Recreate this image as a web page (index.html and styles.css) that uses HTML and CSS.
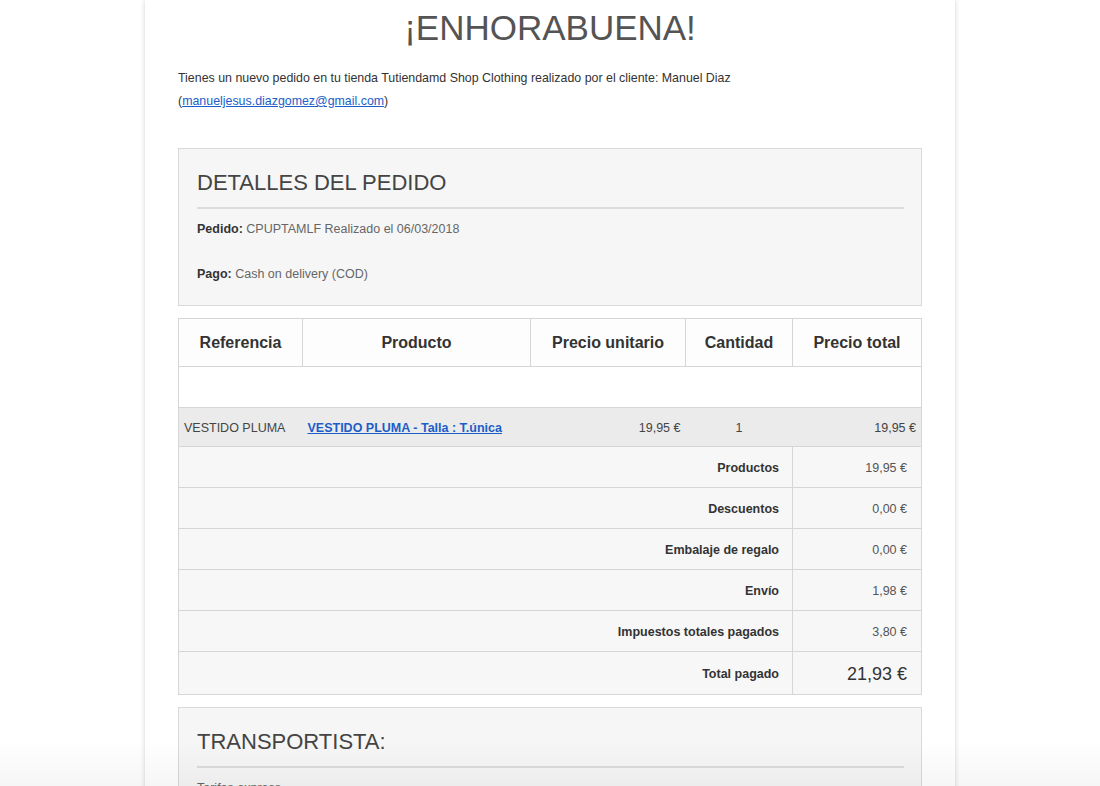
FILE: index.html
```html
<!DOCTYPE html>
<html lang="es">
<head>
    <meta charset="UTF-8">
    <title>Nuevo pedido</title>
    <link rel="stylesheet" href="styles.css">
</head>
<body>
    <div class="mail">
        <h1>¡ENHORABUENA!</h1>
        <p class="intro">
            Tienes un nuevo pedido en tu tienda Tutiendamd Shop Clothing realizado por el cliente: Manuel Diaz<br>
            (<a href="#">manueljesus.diazgomez@gmail.com</a>)
        </p>

        <div class="box">
            <h2>DETALLES DEL PEDIDO</h2>
            <p><strong>Pedido:</strong> CPUPTAMLF Realizado el 06/03/2018</p>
            <p><strong>Pago:</strong> Cash on delivery (COD)</p>
        </div>

        <table class="order">
            <colgroup>
                <col class="c-ref">
                <col class="c-prod">
                <col class="c-unit">
                <col class="c-qty">
                <col class="c-total">
            </colgroup>
            <thead>
                <tr>
                    <th>Referencia</th>
                    <th>Producto</th>
                    <th>Precio unitario</th>
                    <th>Cantidad</th>
                    <th>Precio total</th>
                </tr>
            </thead>
            <tbody>
                <tr class="empty"><td colspan="5"></td></tr>
                <tr class="item">
                    <td>VESTIDO PLUMA</td>
                    <td><a href="#">VESTIDO PLUMA - Talla : T.única</a></td>
                    <td class="right">19,95 €</td>
                    <td class="center">1</td>
                    <td class="right">19,95 €</td>
                </tr>
                <tr class="sum">
                    <td colspan="4" class="label">Productos</td>
                    <td class="value">19,95 €</td>
                </tr>
                <tr class="sum">
                    <td colspan="4" class="label">Descuentos</td>
                    <td class="value">0,00 €</td>
                </tr>
                <tr class="sum">
                    <td colspan="4" class="label">Embalaje de regalo</td>
                    <td class="value">0,00 €</td>
                </tr>
                <tr class="sum">
                    <td colspan="4" class="label">Envío</td>
                    <td class="value">1,98 €</td>
                </tr>
                <tr class="sum">
                    <td colspan="4" class="label">Impuestos totales pagados</td>
                    <td class="value">3,80 €</td>
                </tr>
                <tr class="sum grand">
                    <td colspan="4" class="label">Total pagado</td>
                    <td class="value">21,93 €</td>
                </tr>
            </tbody>
        </table>

        <div class="box">
            <h2>TRANSPORTISTA:</h2>
            <p>Tarifas express</p>
        </div>
    </div>
    <div class="fade"></div>
</body>
</html>
```

FILE: styles.css
```css
body {
    margin: 0;
    background: #fff;
    font-family: 'Liberation Sans', Arial, sans-serif;
    color: #333;
    overflow: hidden;
}

.mail {
    width: 744px;
    margin: 0 auto;
    padding: 7px 33px 40px;
    background: #fff;
    box-shadow: 0 0 5px rgba(0, 0, 0, 0.18);
}

h1 {
    margin: 0;
    font-size: 35px;
    font-weight: normal;
    color: #555454;
    text-align: center;
    line-height: 41px;
}

.intro {
    margin: 19px 0 35px;
    font-size: 12.4px;
    line-height: 23px;
    color: #333;
}

.intro a {
    color: #1b5ec9;
}

.box {
    background: #f6f6f6;
    border: 1px solid #d9d9d9;
    padding: 19px 17px 23px 18px;
}

.box h2 {
    margin: 0 0 13px;
    padding-bottom: 9px;
    border-bottom: 2px solid #dcdcdc;
    font-size: 22px;
    font-weight: normal;
    color: #444;
    line-height: 30px;
}

.box p {
    margin: 0 0 30px;
    font-size: 12.5px;
    line-height: 15px;
    color: #666;
}

.box p:last-child {
    margin-bottom: 0;
}

.box strong {
    color: #333;
}

.order {
    width: 743px;
    margin: 12px 0 12px;
    border-collapse: collapse;
    table-layout: fixed;
    border: 1px solid #d6d6d6;
    font-size: 12.5px;
}

.c-ref { width: 124px; }
.c-prod { width: 228px; }
.c-unit { width: 155px; }
.c-qty { width: 107px; }
.c-total { width: 129px; }

.order th {
    height: 47px;
    border: 1px solid #d6d6d6;
    font-size: 16px;
    font-weight: bold;
    color: #333;
    background: #fdfdfd;
    padding: 0;
}

.order td {
    padding: 2px 5px 0;
}

.empty td {
    height: 38px;
    background: #fff;
}

.item td {
    height: 36px;
    background: #ebebeb;
    color: #444;
    border-top: 1px solid #d6d6d6;
}

.item a {
    color: #1b5ec9;
    font-weight: bold;
}

.right {
    text-align: right;
}

.center {
    text-align: center;
}

.sum td {
    height: 38px;
    background: #f7f7f7;
    border: 1px solid #d6d6d6;
}

.sum .label {
    text-align: right;
    font-weight: bold;
    color: #333;
    padding-right: 13px;
}

.sum .value {
    text-align: right;
    color: #555;
    padding-right: 14px;
}

.grand td {
    height: 40px;
}

.grand .value {
    font-size: 18px;
    color: #333;
}

.fade {
    position: fixed;
    left: 0;
    right: 0;
    bottom: 0;
    height: 46px;
    background: linear-gradient(rgba(0, 0, 0, 0), rgba(0, 0, 0, 0.035));
    pointer-events: none;
}
```
